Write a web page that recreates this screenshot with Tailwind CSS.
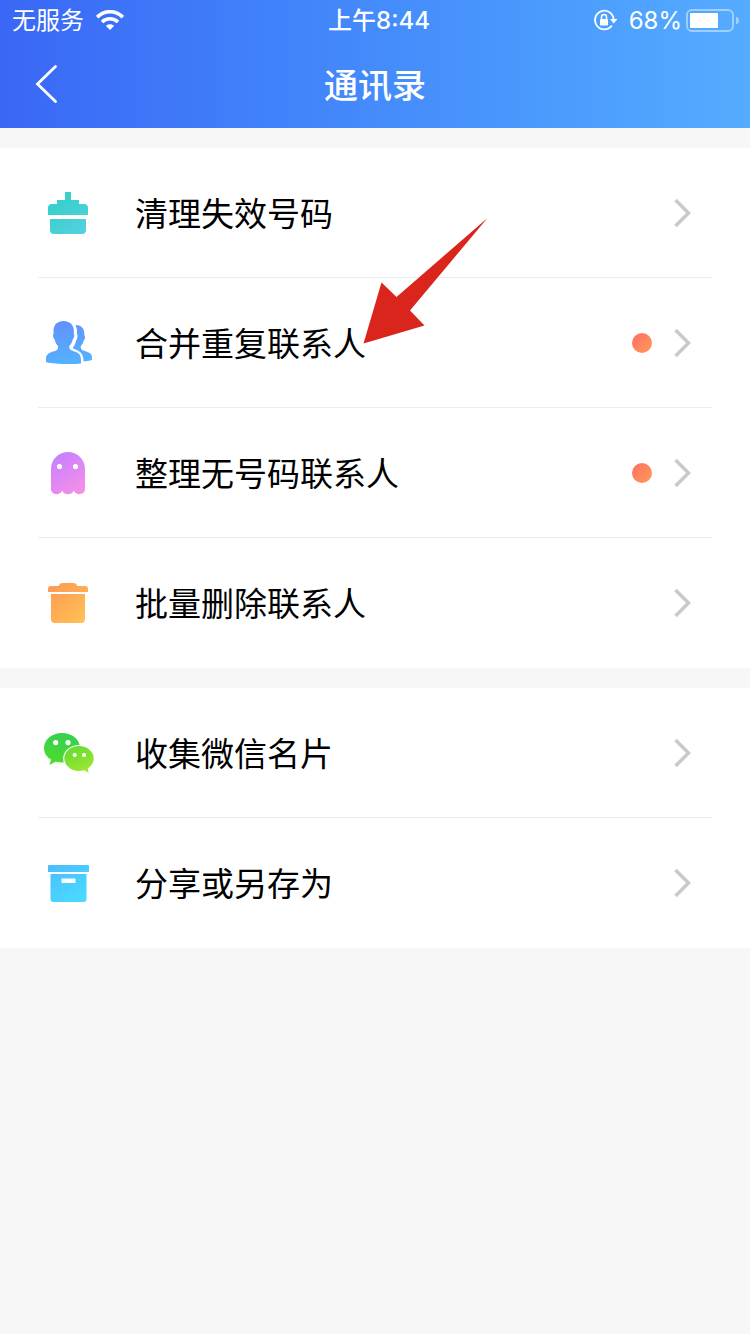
<!DOCTYPE html>
<html lang="zh-CN">
<head>
<meta charset="utf-8">
<meta name="viewport" content="width=device-width, initial-scale=1">
<title>通讯录</title>
<script src="https://cdn.jsdelivr.net/npm/@tailwindcss/browser@4"></script>
</head>
<body class="min-h-screen bg-[#f7f7f7] font-['Inter','Noto_Sans_CJK_SC',sans-serif] text-black">
<header class="bg-linear-to-r from-[#3a67f6] to-[#54acff] text-white">
  <div class="grid h-10 grid-cols-3 items-center px-3 text-2xl">
    <div class="flex items-center gap-3">
      <span class="pt-0.5">无服务</span>
      <svg class="h-5 w-7" viewBox="0 0 28 20" fill="none" stroke="#fff" stroke-width="3.6" aria-hidden="true">
        <path d="M1.2 7.2C8.4-.1 19.6-.1 26.800 7.200"/>
        <path d="M6 12C10.500 7.700 17.500 7.700 22 12"/>
        <path d="M14 20 9.800 15.800C12.200 13.600 15.800 13.600 18.200 15.800Z" fill="#fff" stroke="none"/>
      </svg>
    </div>
    <div class="pt-0.5 pl-2 text-center font-medium">上午8:44</div>
    <div class="flex items-center justify-end gap-1">
      <svg class="mr-2 h-6 w-6 shrink-0" viewBox="0 0 24 24" fill="none" stroke="#fff" stroke-width="1.8" aria-hidden="true">
        <path d="M18.800 17.600A9.300 9.300 0 1 1 20.600 11"/>
        <path d="M17 11H24.500L20.700 15.500Z" fill="#fff" stroke="none"/>
        <rect x="7" y="11" width="8" height="6.500" rx="1" fill="#fff" stroke="none"/>
        <path d="M8.500 11.500V9A2.500 2.500 0 0 1 13.500 9V11.500" stroke-width="1.500"/>
      </svg>
      <span class="pt-0.5">68%</span>
      <svg class="-mr-0.5 h-6 w-[54px] shrink-0" viewBox="0 0 54 24" aria-hidden="true">
        <rect x="1" y="2" width="46" height="21" rx="5" fill="none" stroke="#fff" stroke-opacity=".45" stroke-width="2"/>
        <rect x="4" y="5" width="28" height="15" rx="1" fill="#fff"/>
        <path d="M50 8.500Q53 9.500 53 12.500T50 16.500Z" fill="#fff" fill-opacity=".45"/>
      </svg>
    </div>
  </div>
  <div class="grid h-22 grid-cols-[80px_1fr_80px] items-center">
    <button type="button" aria-label="返回" class="flex h-full items-center pl-[34px]">
      <svg class="h-10 w-6" viewBox="0 0 24 40" fill="none" stroke="#fff" stroke-width="2.800" stroke-linecap="round" aria-hidden="true"><path d="M21.500 2.500 3.500 20 21.500 37.500"/></svg>
    </button>
    <h1 class="pt-0.5 text-center text-[34px] font-medium">通讯录</h1>
  </div>
</header>

<main>
  <nav aria-label="整理" class="mt-5 bg-white px-[38px]">
    <a href="#invalid" class="flex h-[130px] items-center border-b border-[#ececec]">
      <svg class="h-15 w-15 shrink-0" viewBox="0 0 60 60" aria-hidden="true">
        <defs><linearGradient id="teal" gradientUnits="userSpaceOnUse" x1="15" y1="9" x2="45" y2="51"><stop stop-color="#2fd0c4"/><stop offset="1" stop-color="#54d0e0"/></linearGradient></defs>
        <path fill="url(#teal)" d="M27 9H33V17H41V21H46Q50 21 50 25V32H10V25Q10 21 14 21H19V17H27ZM12 36H48V47Q48 51 44 51H16Q12 51 12 47Z"/>
      </svg>
      <span class="ml-[37px] flex-1 pt-0.5 text-[33px] leading-10">清理失效号码</span>
      <svg class="mr-5 h-8 w-5 shrink-0" viewBox="0 0 20 32" fill="none" stroke="#c9c9c9" stroke-width="3.500" aria-hidden="true"><path d="M3.500 3 16.500 16 3.500 29"/></svg>
    </a>
    <a href="#merge" class="relative flex h-[130px] items-center border-b border-[#ececec]">
      <svg class="h-15 w-15 shrink-0" viewBox="0 0 60 60" aria-hidden="true">
        <defs><linearGradient id="blue" gradientUnits="userSpaceOnUse" x1="24" y1="8" x2="32" y2="51"><stop stop-color="#6390ff"/><stop offset="1" stop-color="#53b3ff"/></linearGradient></defs>
        <g fill="url(#blue)">
          <path d="M25.500 8C19.500 8 15.700 11.500 15.500 17.500L15.600 21C14.700 21.500 15 25 16.600 26.500C17.200 29.300 18.500 31.500 20 33C20.300 36 19.500 37.300 16 38.300C10.500 39.800 8 41.500 8 46V49C14 51.400 37 51.400 43 50.500C43.500 43 42 40.300 36.500 38.500C32.500 37.200 31 36 31.300 33C33 31.500 34.200 29.300 34.700 26.500C36.300 25 36.800 21.500 35.800 21L35.900 17.500C35.500 11.500 31.500 8 25.500 8Z"/>
          <path d="M37.500 12C43 12 46 15 46.300 20L46.400 22.500C47.500 24 47 26.500 45.700 27.500C45.200 30 44.200 31.500 42.800 33C42.700 36 43.500 37 46.500 38C52 39.500 54 41 54 44.500V47C51.500 48 48.500 48.300 45.500 48.300C45.500 42 43 38.700 38 36.800C35.500 35.800 34.500 35.300 35 34.300C37 32 37.500 30 38 28C40 25.500 39.600 22 39 20C39.300 17 38.500 14 37.500 12Z"/>
        </g>
      </svg>
      <span class="ml-[37px] flex-1 pt-0.5 text-[33px] leading-10">合并重复联系人</span>
      <span class="mr-5 h-5 w-5 rounded-full bg-linear-to-br from-[#ff6c64] to-[#ff9c55]"></span>
      <svg class="mr-5 h-8 w-5 shrink-0" viewBox="0 0 20 32" fill="none" stroke="#c9c9c9" stroke-width="3.500" aria-hidden="true"><path d="M3.500 3 16.500 16 3.500 29"/></svg>
      <svg class="pointer-events-none absolute -top-[62px] left-[324px] h-32 w-32" viewBox="0 0 128 128" aria-hidden="true"><path fill="#da251d" d="M1.500 127.500 19.500 66.500 34.500 81 125.500 2 48 94.500 62.500 109.500Z"/></svg>
    </a>
    <a href="#nonumber" class="flex h-[130px] items-center border-b border-[#ececec]">
      <svg class="h-15 w-15 shrink-0" viewBox="0 0 60 60" aria-hidden="true">
        <defs><linearGradient id="purple" gradientUnits="userSpaceOnUse" x1="18" y1="12" x2="44" y2="51"><stop stop-color="#c680ff"/><stop offset="1" stop-color="#f890e6"/></linearGradient></defs>
        <path fill="url(#purple)" d="M13 26A17 17 0 0 1 47 26V46.500C46.500 52.500 37.500 52.500 35.700 47.500C34.500 52.500 25.500 52.500 24.300 47.500C22.500 52.500 13.500 52.500 13 46.500Z"/>
        <circle cx="21.500" cy="23.500" r="2.600" fill="#fff"/><circle cx="37.500" cy="23.500" r="2.600" fill="#fff"/>
      </svg>
      <span class="ml-[37px] flex-1 pt-0.5 text-[33px] leading-10">整理无号码联系人</span>
      <span class="mr-5 h-5 w-5 rounded-full bg-linear-to-br from-[#ff6c64] to-[#ff9c55]"></span>
      <svg class="mr-5 h-8 w-5 shrink-0" viewBox="0 0 20 32" fill="none" stroke="#c9c9c9" stroke-width="3.500" aria-hidden="true"><path d="M3.500 3 16.500 16 3.500 29"/></svg>
    </a>
    <a href="#delete" class="flex h-[130px] items-center">
      <svg class="h-15 w-15 shrink-0" viewBox="0 0 60 60" aria-hidden="true">
        <defs><linearGradient id="orange" gradientUnits="userSpaceOnUse" x1="15" y1="11" x2="46" y2="50"><stop stop-color="#ff9a55"/><stop offset="1" stop-color="#ffc154"/></linearGradient></defs>
        <path fill="url(#orange)" d="M10 19V16Q10 13 13 13H20.500Q22 10 24 10H36Q38 10 39.500 13H47Q50 13 50 16V19ZM13 21H47V46Q47 50 43 50H17Q13 50 13 46Z"/>
      </svg>
      <span class="ml-[37px] flex-1 pt-0.5 text-[33px] leading-10">批量删除联系人</span>
      <svg class="mr-5 h-8 w-5 shrink-0" viewBox="0 0 20 32" fill="none" stroke="#c9c9c9" stroke-width="3.500" aria-hidden="true"><path d="M3.500 3 16.500 16 3.500 29"/></svg>
    </a>
  </nav>

  <nav aria-label="收集与分享" class="mt-5 bg-white px-[38px]">
    <a href="#wechat" class="flex h-[130px] items-center border-b border-[#ececec]">
      <svg class="h-15 w-15 shrink-0" viewBox="0 0 60 60" aria-hidden="true">
        <defs>
          <linearGradient id="green" gradientUnits="userSpaceOnUse" x1="24" y1="10" x2="18" y2="42"><stop stop-color="#35d050"/><stop offset="1" stop-color="#4fdd2c"/></linearGradient>
          <linearGradient id="lime" gradientUnits="userSpaceOnUse" x1="34" y1="23" x2="46" y2="50"><stop stop-color="#62dd30"/><stop offset="1" stop-color="#a0e634"/></linearGradient>
        </defs>
        <path fill="url(#green)" d="M24 10C34 10 42 16.500 42 25S34 39.500 24 39.500Q20.500 39.500 17.500 38.800L11.500 42L13 36.600C8.500 34 6 30 6 25C6 16.500 14 10 24 10Z"/>
        <path fill="url(#lime)" stroke="#fff" stroke-width="1.200" d="M41 22.500C49.500 22.500 56.300 28.500 56.300 35.500Q56.300 42 50.500 45.800L51.500 50.800L46 47.800Q43.500 48.500 41 48.500C32.500 48.500 25.700 42.500 25.700 35.500S32.500 22.500 41 22.500Z"/>
        <g fill="#fff"><circle cx="17.700" cy="19.600" r="2.600"/><circle cx="30" cy="19.600" r="2.600"/><circle cx="36.700" cy="32" r="2.100"/><circle cx="46" cy="32" r="2.100"/></g>
      </svg>
      <span class="ml-[37px] flex-1 pt-0.5 text-[33px] leading-10">收集微信名片</span>
      <svg class="mr-5 h-8 w-5 shrink-0" viewBox="0 0 20 32" fill="none" stroke="#c9c9c9" stroke-width="3.500" aria-hidden="true"><path d="M3.500 3 16.500 16 3.500 29"/></svg>
    </a>
    <a href="#share" class="flex h-[130px] items-center">
      <svg class="h-15 w-15 shrink-0" viewBox="0 0 60 60" aria-hidden="true">
        <defs><linearGradient id="cyan" gradientUnits="userSpaceOnUse" x1="18" y1="12" x2="42" y2="49"><stop stop-color="#4cbeff"/><stop offset="1" stop-color="#48dcff"/></linearGradient></defs>
        <path fill="url(#cyan)" fill-rule="evenodd" d="M11 12H50Q51 12 51 13V19H10V13Q10 12 11 12ZM12.500 21H48.500V46Q48.500 49 45.500 49H15.500Q12.500 49 12.500 46ZM23.500 25.500V30H37.500V25.500Z"/>
      </svg>
      <span class="ml-[37px] flex-1 pt-0.5 text-[33px] leading-10">分享或另存为</span>
      <svg class="mr-5 h-8 w-5 shrink-0" viewBox="0 0 20 32" fill="none" stroke="#c9c9c9" stroke-width="3.500" aria-hidden="true"><path d="M3.500 3 16.500 16 3.500 29"/></svg>
    </a>
  </nav>
</main>
</body>
</html>
